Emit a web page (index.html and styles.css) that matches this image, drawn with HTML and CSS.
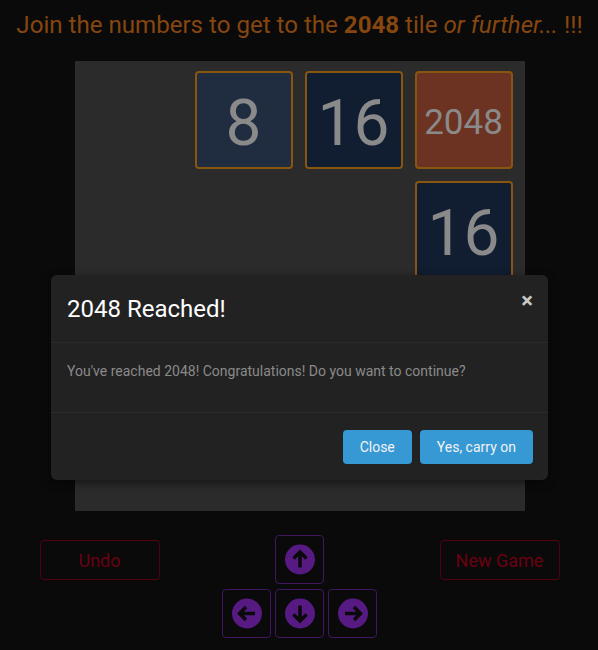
FILE: index.html
```html
<!DOCTYPE html>
<html>
<head>
<meta charset="utf-8">
<link rel="stylesheet" href="styles.css">
</head>
<body>
<div class="page">
  <h1 class="title">Join the numbers to get to the <b>2048</b> tile <i>or further...</i> !!!</h1>
  <div class="board">
    <div class="cell"></div>
    <div class="tile t8">8</div>
    <div class="tile t16">16</div>
    <div class="tile t2048">2048</div>
    <div class="cell"></div><div class="cell"></div><div class="cell"></div>
    <div class="tile t16">16</div>
  </div>
  <div class="controls">
    <button class="btn-outline">Undo</button>
    <div class="pad">
      <span></span>
      <div class="key"><svg viewBox="0 0 30 30"><circle cx="15" cy="15" r="15"/><path d="M15 23V8M8.5 14L15 7.5L21.5 14"/></svg></div>
      <span></span>
      <div class="key"><svg viewBox="0 0 30 30"><circle cx="15" cy="15" r="15"/><path d="M23 15H8M14 8.5L7.5 15L14 21.5"/></svg></div>
      <div class="key"><svg viewBox="0 0 30 30"><circle cx="15" cy="15" r="15"/><path d="M15 7V22M8.5 16L15 22.5L21.5 16"/></svg></div>
      <div class="key"><svg viewBox="0 0 30 30"><circle cx="15" cy="15" r="15"/><path d="M7 15H22M16 8.5L22.5 15L16 21.5"/></svg></div>
    </div>
    <button class="btn-outline">New Game</button>
  </div>
</div>
<div class="modal">
  <div class="modal-header">
    <h4 class="modal-title">2048 Reached!</h4>
    <span class="close">&times;</span>
  </div>
  <div class="modal-body">You've reached 2048! Congratulations! Do you want to continue?</div>
  <div class="modal-footer">
    <button class="btn-primary">Close</button>
    <button class="btn-primary">Yes, carry on</button>
  </div>
</div>
</body>
</html>
```
FILE: styles.css
```css
html, body {
  margin: 0;
  padding: 0;
  background: #0a0a0a;
  font-family: Roboto, "Liberation Sans", sans-serif;
}
.page {
  display: flex;
  flex-direction: column;
  align-items: center;
  height: 650px;
  padding-left: 1px;
}
.title {
  margin: 9px 0 0;
  font-size: 24.1px;
  line-height: 32px;
  font-weight: 400;
  color: #86460f;
  white-space: nowrap;
}
.title b { font-weight: 700; }
.board {
  margin-top: 20px;
  width: 450px;
  height: 450px;
  box-sizing: border-box;
  background: #2b2b2b;
  padding: 10px 12px 10px 10px;
  display: grid;
  grid-template-columns: repeat(4, 98px);
  grid-template-rows: repeat(4, 98px);
  gap: 12px;
}
.tile {
  box-sizing: border-box;
  border: 2px solid #8a560f;
  border-radius: 4px;
  display: flex;
  align-items: center;
  justify-content: center;
  color: #8a8a8a;
  font-size: 64px;
  padding-top: 7px;
}
.t8 { background: #202d40; }
.t16 { background: #111d30; }
.t2048 { background: #6d3322; font-size: 35px; padding-top: 5px; }
.controls {
  margin-top: 24px;
  width: 520px;
  display: flex;
  justify-content: space-between;
  align-items: flex-start;
}
.btn-outline {
  margin-top: 5px;
  width: 120px;
  height: 40px;
  background: transparent;
  border: 1px solid #55000f;
  border-radius: 4px;
  color: #6a0012;
  font-family: Roboto, "Liberation Sans", sans-serif;
  font-size: 18px;
  padding: 0;
}
.pad {
  display: grid;
  grid-template-columns: repeat(3, 49px);
  grid-template-rows: repeat(2, 49px);
  column-gap: 4px;
  row-gap: 5px;
}
.key {
  box-sizing: border-box;
  border: 1px solid #3f1660;
  border-radius: 4px;
  display: flex;
  align-items: center;
  justify-content: center;
}
.key svg { width: 30px; height: 31px; }
.key circle { fill: #571a82; }
.key path { fill: none; stroke: #0a0a0a; stroke-width: 3.5; }
.modal {
  position: absolute;
  left: 51px;
  top: 275px;
  width: 497px;
  background: #222222;
  border-radius: 6px;
  box-shadow: 0 3px 9px rgba(0,0,0,0.5);
}
.modal-header {
  height: 68px;
  box-sizing: border-box;
  padding: 0 15px 0 16px;
  border-bottom: 1px solid #2b2b2b;
  display: flex;
  align-items: center;
  justify-content: space-between;
}
.modal-title {
  margin: 0;
  font-size: 24px;
  font-weight: 400;
  color: #ffffff;
}
.close {
  align-self: flex-start;
  margin-top: 15px;
  color: #c8c8c8;
  font-size: 22px;
  font-weight: 700;
  line-height: 22px;
}
.modal-body {
  height: 70px;
  box-sizing: border-box;
  padding: 18px 16px 0;
  font-size: 14px;
  line-height: 20px;
  color: #8a8a8a;
  border-bottom: 1px solid #2b2b2b;
}
.modal-footer {
  height: 67px;
  box-sizing: border-box;
  padding: 17px 15px 0;
  display: flex;
  justify-content: flex-end;
  gap: 8px;
}
.btn-primary {
  height: 34px;
  padding: 0 17px;
  background: #3699d4;
  border: none;
  border-radius: 4px;
  color: #f2f2f2;
  font-family: Roboto, "Liberation Sans", sans-serif;
  font-size: 14px;
}
```
